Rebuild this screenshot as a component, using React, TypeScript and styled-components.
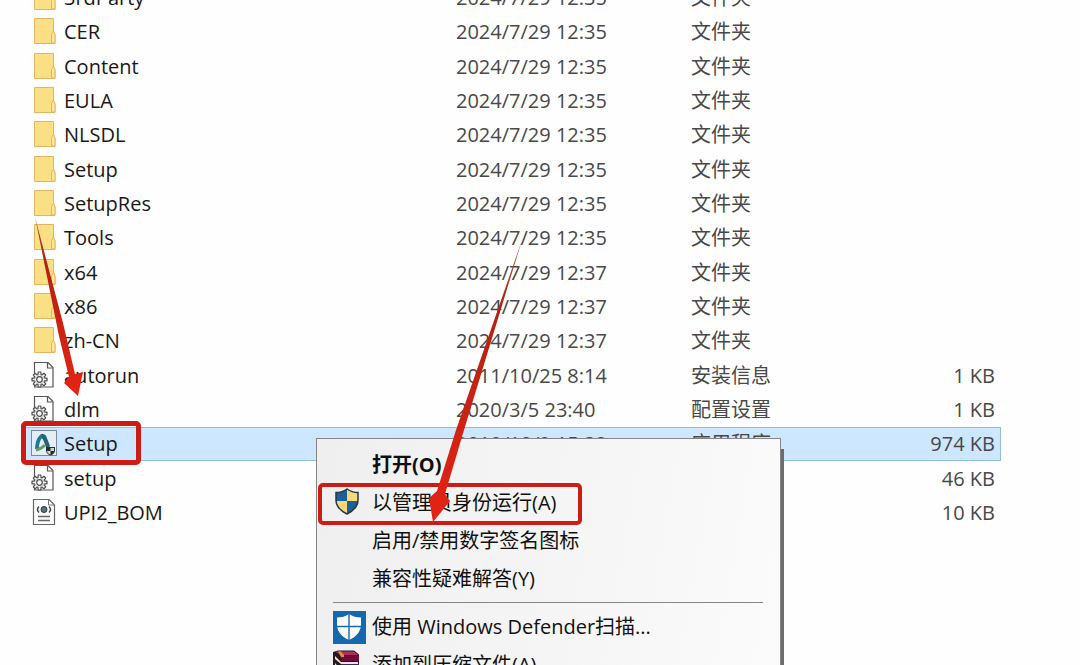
import React from "react";
import styled, { createGlobalStyle, css } from "styled-components";

const GlobalStyle = createGlobalStyle`
  * { box-sizing: border-box; }
  html, body { margin: 0; padding: 0; background: #fefefe; }
  body {
    font-family: "Open Sans", "Noto Sans CJK SC", sans-serif;
    font-size: 20px;
    color: #1a1a1a;
  }
`;

const Desktop = styled.main`
  position: relative;
  height: 100vh;
  overflow: hidden;
`;

const FileTable = styled.table`
  width: calc(100% - 105px);
  margin: -19px 79px 0 26px;
  border-collapse: separate;
  border-spacing: 0;
  table-layout: fixed;
`;

const NameCol = styled.col`
  width: 430px;
`;

const DateCol = styled.col`
  width: 235px;
`;

const Cell = styled.td<{ $align?: "right" }>`
  padding: 0;
  line-height: 28px;
  color: #484848;
  white-space: nowrap;
  text-align: ${(p) => p.$align ?? "left"};
  padding-right: ${(p) => (p.$align ? "6px" : "0")};
`;

const FileRow = styled.tr<{ $selected: boolean }>`
  height: 34px;

  &:nth-child(3n) {
    height: 35px;
  }

  ${(p) =>
    p.$selected &&
    css`
      ${Cell} {
        background: #cce7ff;
        box-shadow: inset 0 1px #93bfdf, inset 0 -1px #93bfdf;
      }
      ${Cell}:last-child {
        box-shadow: inset 0 1px #93bfdf, inset -1px -1px #93bfdf;
      }
    `}
`;

const FileName = styled.span`
  display: flex;
  align-items: center;
  gap: 7px;
  padding-left: 3px;
  color: #181818;
`;

const FileIcon = styled.svg`
  flex: none;
  width: 28px;
  height: 28px;
`;

const Menu = styled.div`
  position: absolute;
  top: 438px;
  left: 316px;
  width: 465px;
  height: 300px;
  padding: 7px 16px;
  border: 1px solid #858585;
  background: linear-gradient(100deg, #efefef, #f5f5f5 50%, #fbfbfb);
  box-shadow: 3px 11px 0 #6c6c6c;
`;

const MenuItem = styled.button<{ $bold?: boolean }>`
  display: grid;
  grid-template-columns: 33px 1fr;
  column-gap: 6px;
  align-items: center;
  width: 100%;
  height: 38px;
  padding: 0;
  border: 0;
  background: none;
  font: inherit;
  font-weight: ${(p) => (p.$bold ? 700 : 400)};
  line-height: 28px;
  color: #101010;
  text-align: left;
  white-space: nowrap;
`;

const MenuIcon = styled.svg`
  width: 33px;
  height: 33px;
`;

const MenuDivider = styled.hr`
  height: 1px;
  margin: 4px 1px 5px 0;
  border: 0;
  background: #858585;
`;

const Highlight = styled.div<{ $x: number; $y: number; $w: number; $h: number; $thick: number }>`
  position: absolute;
  left: ${(p) => p.$x}px;
  top: ${(p) => p.$y}px;
  width: ${(p) => p.$w}px;
  height: ${(p) => p.$h}px;
  border: ${(p) => p.$thick}px solid #cb1c16;
  border-radius: 5px;
  pointer-events: none;
`;

const Arrows = styled.svg`
  position: absolute;
  top: 0;
  left: 0;
  width: 600px;
  height: 560px;
  pointer-events: none;
`;

type Kind = "folder" | "config" | "app" | "manifest";

interface Entry {
  name: string;
  date: string;
  type: string;
  size?: string;
  kind: Kind;
}

const folder = (name: string, time: string): Entry => ({
  name,
  date: `2024/7/29 ${time}`,
  type: "文件夹",
  kind: "folder",
});

const entries: Entry[] = [
  folder("3rdParty", "12:35"),
  folder("CER", "12:35"),
  folder("Content", "12:35"),
  folder("EULA", "12:35"),
  folder("NLSDL", "12:35"),
  folder("Setup", "12:35"),
  folder("SetupRes", "12:35"),
  folder("Tools", "12:35"),
  folder("x64", "12:37"),
  folder("x86", "12:37"),
  folder("zh-CN", "12:37"),
  { name: "autorun", date: "2011/10/25 8:14", type: "安装信息", size: "1 KB", kind: "config" },
  { name: "dlm", date: "2020/3/5 23:40", type: "配置设置", size: "1 KB", kind: "config" },
  { name: "Setup", date: "2018/10/9 15:32", type: "应用程序", size: "974 KB", kind: "app" },
  { name: "setup", date: "", type: "", size: "46 KB", kind: "config" },
  { name: "UPI2_BOM", date: "", type: "", size: "10 KB", kind: "manifest" },
];

const teeth = [0, 45, 90, 135, 180, 225, 270, 315];

function EntryIcon({ kind }: { kind: Kind }) {
  return (
    <FileIcon viewBox="0 1 28 28" aria-hidden="true">
      {kind === "folder" && (
        <>
          <path d="M5.5 1.5H24.5V15L26 18V26.5H5.5Z" fill="#fbdf85" stroke="#e3b562" />
          <path d="M22.5 26V17.5L24.5 14L26 18V26Z" fill="#fce798" stroke="#e3b562" />
        </>
      )}
      {kind === "config" && (
        <>
          <path d="M5.5 1.5H19L24 6.5V26H5.5Z" fill="#fdfdfd" stroke="#555" strokeWidth="1.2" />
          <path d="M18.5 2V7H23.5" fill="none" stroke="#555" strokeWidth="1.2" />
          <circle cx="10.5" cy="18.5" r="7" fill="#fdfdfd" />
          <circle cx="10.5" cy="18.5" r="5" fill="none" stroke="#4a4a4a" />
          {teeth.map((a) => (
            <path
              key={a}
              d="M8.8 13.8L9.3 11H11.7L12.2 13.8"
              transform={`rotate(${a} 10.5 18.5)`}
              fill="#fdfdfd"
              stroke="#4a4a4a"
              strokeWidth="1.2"
            />
          ))}
          <circle cx="10.5" cy="18.5" r="2.8" fill="#fdfdfd" stroke="#4a4a4a" strokeWidth="1.2" />
        </>
      )}
      {kind === "app" && (
        <>
          <rect x="2.5" y="1.5" width="25" height="25" fill="#e4eef6" stroke="#7d8992" />
          <path d="M8 20C8 15 9.5 10 12 7.5C13.5 6 15.5 7 16 9" fill="none" stroke="#1f7a99" strokeWidth="3.8" />
          <path d="M13 5.5C17 5 18.500 10 21 17L18 20.500C16 16 15 11 12 8Z" fill="#276273" />
          <path d="M7 21C11 20.5 13 19 16 16" fill="none" stroke="#6d9a5a" strokeWidth="3" />
          <path d="M17 18H26V21.5C26 24 24 25.5 21.5 26.5C19 25.5 17 24 17 21.5Z" fill="#20303a" />
          <path d="M21.5 19H25V22H21.5ZM18 22H21.5V25.500C19.500 25 18 24 18 22Z" fill="#d8d3b0" />
        </>
      )}
      {kind === "manifest" && (
        <>
          <path d="M4.5 1.5H20L25.5 7V26.5H4.5Z" fill="#fdfdfd" stroke="#666" strokeWidth="1.2" />
          <path d="M19.5 2V7H25" fill="none" stroke="#777" />
          <circle cx="15" cy="11.5" r="3" fill="#4b7b78" stroke="#333" />
          <path d="M10 8.5Q7 11.5 10 14.5M20 8.5Q23 11.5 20 14.5" fill="none" stroke="#444" strokeWidth="1.5" />
          <path d="M9 18.5H21M9 22.5H21" stroke="#666" strokeWidth="1.3" />
        </>
      )}
    </FileIcon>
  );
}

function UacShield() {
  return (
    <MenuIcon viewBox="0 0 33 33" aria-hidden="true">
      <path d="M14 2C10.5 4.5 6.5 5.5 3 5.5V13C3 20 8 24 14 27Z" fill="#1b6197" />
      <path d="M14 2C17.5 4.5 21.5 5.5 25 5.5V13C25 20 20 24 14 27Z" fill="#f8d878" />
      <path d="M3 14H14V27C8 24 3.5 20 3 14Z" fill="#f8d878" />
      <path d="M14 14H25C24.5 20 20 24 14 27Z" fill="#1b6197" />
      <path
        d="M14 2C10.5 4.5 6.5 5.5 3 5.5V13C3 20 8 24 14 27C20 24 25 20 25 13V5.5C21.5 5.5 17.5 4.5 14 2Z"
        fill="none"
        stroke="#263746"
        strokeWidth="1.5"
      />
    </MenuIcon>
  );
}

function DefenderIcon() {
  return (
    <MenuIcon viewBox="0 0 33 33" aria-hidden="true">
      <rect width="33" height="33" fill="#1468ad" />
      <path d="M16 3C12.5 5.5 8.5 6.5 4 6.5V14C4.5 21 9 26 16 29C23 26 27.5 21 28 14V6.5C23.5 6.5 19.5 5.5 16 3Z" fill="#fff" />
      <path d="M16 2V30M3 15.5H29" stroke="#1468ad" strokeWidth="1.4" />
    </MenuIcon>
  );
}

function ArchiveIcon() {
  return (
    <MenuIcon viewBox="0 0 33 33" aria-hidden="true">
      <path d="M0 3L5 1.5H21L26 5.5V28H7L0 23Z" fill="#2a1820" />
      <path d="M2 2.5H21L25 6H8Z" fill="#b0305f" />
      <path d="M8 6.5H26V12H8Z" fill="#740c39" />
      <path d="M2 7L8 13H25V15H8L2 10Z" fill="#eee6df" />
      <path d="M8 15.5H26V21H8Z" fill="#354c98" />
      <path d="M2 14L8 21H25V24H8L2 19Z" fill="#eee6df" />
      <path d="M5 2.5H8L11 6V8H8Z" fill="#dd8e43" />
    </MenuIcon>
  );
}

export default function App() {
  return (
    <>
      <GlobalStyle />
      <Desktop>
        <FileTable aria-label="文件">
          <colgroup>
            <NameCol />
            <DateCol />
            <col />
            <col />
          </colgroup>
          <tbody>
            {entries.map((e) => (
              <FileRow key={`${e.kind}-${e.name}`} $selected={e.kind === "app"}>
                <Cell>
                  <FileName>
                    <EntryIcon kind={e.kind} />
                    {e.name}
                  </FileName>
                </Cell>
                <Cell>{e.date}</Cell>
                <Cell>{e.type}</Cell>
                <Cell $align="right">{e.size}</Cell>
              </FileRow>
            ))}
          </tbody>
        </FileTable>

        <Menu role="menu">
          <MenuItem role="menuitem" $bold>
            <span />
            打开(O)
          </MenuItem>
          <MenuItem role="menuitem">
            <UacShield />
            以管理员身份运行(A)
          </MenuItem>
          <MenuItem role="menuitem">
            <span />
            启用/禁用数字签名图标
          </MenuItem>
          <MenuItem role="menuitem">
            <span />
            兼容性疑难解答(Y)
          </MenuItem>
          <MenuDivider />
          <MenuItem role="menuitem">
            <DefenderIcon />
            使用 Windows Defender扫描...
          </MenuItem>
          <MenuItem role="menuitem">
            <ArchiveIcon />
            添加到压缩文件(A)
          </MenuItem>
        </Menu>

        <Highlight $x={21} $y={421} $w={120} $h={44} $thick={5} />
        <Highlight $x={318} $y={483} $w={264} $h={42} $thick={4} />

        <Arrows viewBox="0 0 600 560" aria-hidden="true">
          <defs>
            <linearGradient id="shaft" x1="0" y1="0" x2="0" y2="1">
              <stop offset="0" stopColor="#8f5a3c" />
              <stop offset="0.25" stopColor="#b3210f" />
              <stop offset="1" stopColor="#e62315" />
            </linearGradient>
          </defs>
          <path d="M35 217L63 323L75 374L83 372L78 396L64 383L69 377L59 336Z" fill="url(#shaft)" />
          <path d="M522 240L464 430L445 494L450 501L433 522L429 498L437 491L456 430Z" fill="url(#shaft)" />
        </Arrows>
      </Desktop>
    </>
  );
}
